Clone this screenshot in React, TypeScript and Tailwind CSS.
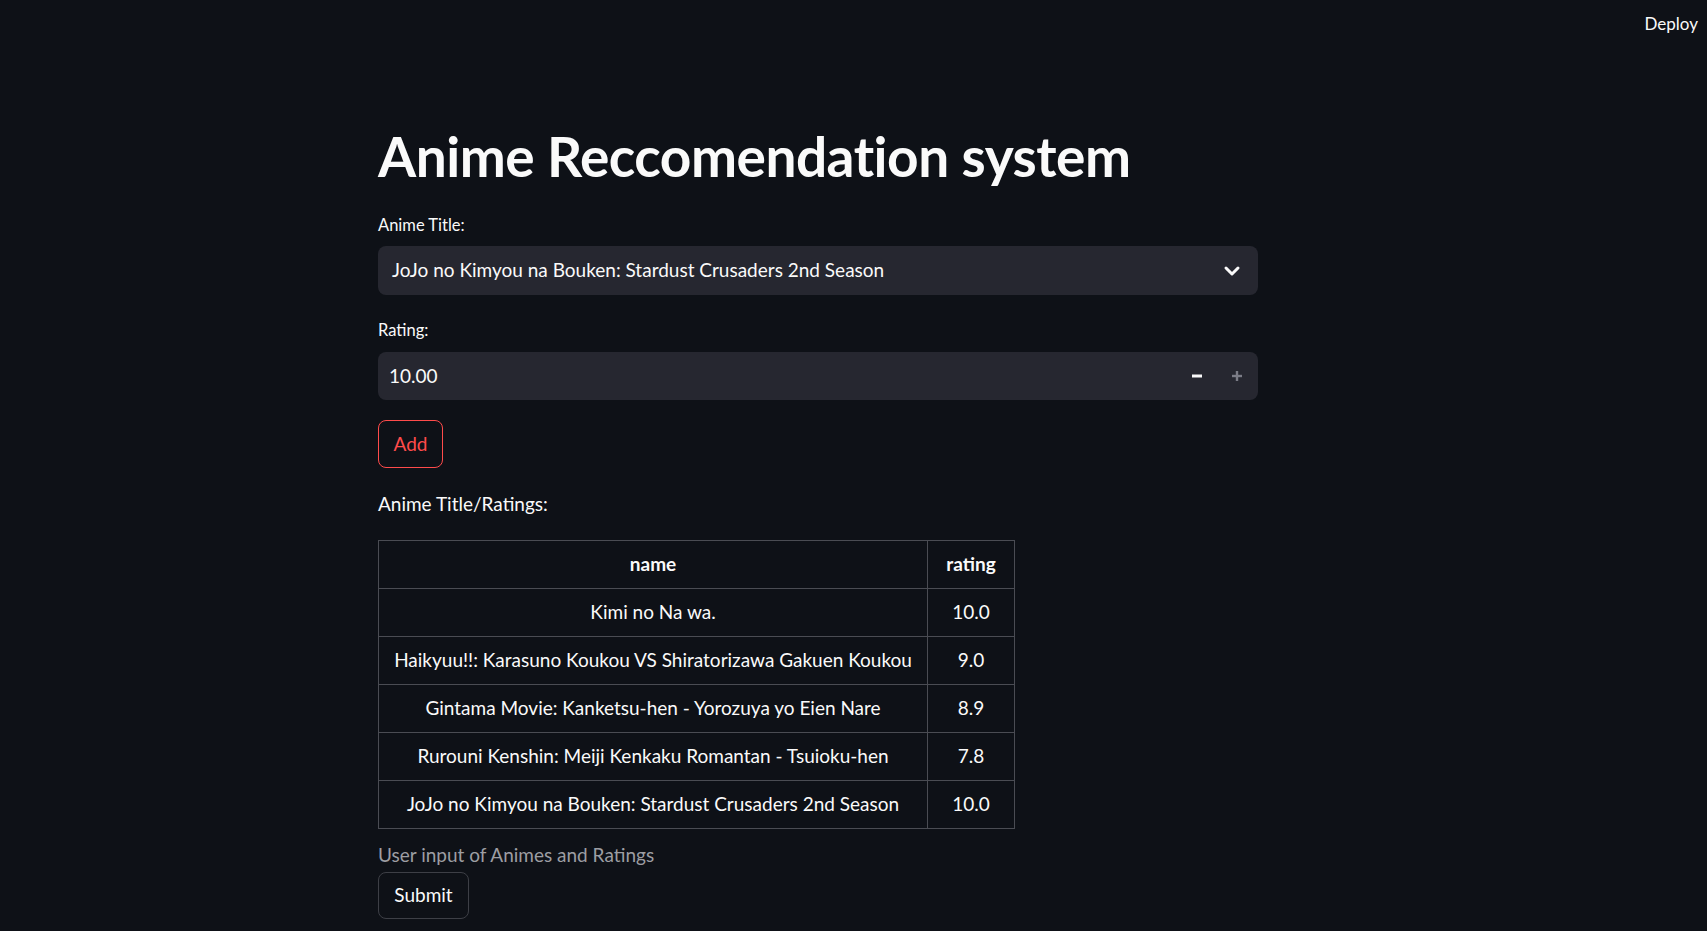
import { ChevronDown } from 'lucide-react'

const rows: [string, string][] = [
  ['Kimi no Na wa.', '10.0'],
  ['Haikyuu!!: Karasuno Koukou VS Shiratorizawa Gakuen Koukou', '9.0'],
  ['Gintama Movie: Kanketsu-hen - Yorozuya yo Eien Nare', '8.9'],
  ['Rurouni Kenshin: Meiji Kenkaku Romantan - Tsuioku-hen', '7.8'],
  ['JoJo no Kimyou na Bouken: Stardust Crusaders 2nd Season', '10.0'],
]

export default function App(): React.ReactElement {
  return (
    <div
      className="min-h-screen bg-[#0e1117] text-[#fafafa]"
      style={{ fontFamily: 'Lato, "Noto Sans", sans-serif' }}
    >
      {/* Top bar */}
      <div className="h-[48px] flex items-center justify-end pr-[9px]">
        <span className="text-[17px]">Deploy</span>
      </div>

      <div className="pl-[378px] pt-[76px] pb-[5px]">
        <div className="w-[880px] flex flex-col">
          <h1 className="h-[64px] leading-[64px] text-[55px] font-bold tracking-[-0.5px]">
            Anime Reccomendation system
          </h1>

          {/* Select */}
          <label className="mt-[27px] h-[20px] leading-[20px] text-[16.5px]">Anime Title:</label>
          <div className="mt-[11px] h-[49px] rounded-[8px] bg-[#262730] flex items-center pl-[14px] pr-[14px]">
            <span className="flex-1 text-[19px]">JoJo no Kimyou na Bouken: Stardust Crusaders 2nd Season</span>
            <ChevronDown size={24} strokeWidth={3} className="text-[#fafafa]" />
          </div>

          {/* Number input */}
          <label className="mt-[25px] h-[20px] leading-[20px] text-[16.5px]">Rating:</label>
          <div className="mt-[12px] h-[48px] rounded-[8px] bg-[#262730] flex items-center pl-[11px]">
            <span className="flex-1 text-[19px]">10.00</span>
            <button className="w-[40px] h-full flex items-center justify-center">
              <svg width="12" height="12" viewBox="0 0 12 12">
                <rect x="1" y="4.5" width="10" height="3" fill="#fafafa" />
              </svg>
            </button>
            <button className="w-[40px] h-full flex items-center justify-center mr-[1px]">
              <svg width="12" height="12" viewBox="0 0 12 12">
                <rect x="1" y="4.8" width="10" height="2.4" fill="#7b7c86" />
                <rect x="4.8" y="1" width="2.4" height="10" fill="#7b7c86" />
              </svg>
            </button>
          </div>

          {/* Add button */}
          <div className="mt-[20px]">
            <button className="h-[48px] w-[65px] rounded-[8px] border border-[#ff4b4b] text-[#ff4b4b] text-[19px] flex items-center justify-center">
              Add
            </button>
          </div>

          <p className="mt-[24px] h-[24px] leading-[24px] text-[19px]">Anime Title/Ratings:</p>

          {/* Table */}
          <table className="mt-[24px] w-[637px] border-collapse text-[19px]">
            <thead>
              <tr className="h-[48px]">
                <th className="w-[550px] border border-[#4a4c53] font-bold text-center">name</th>
                <th className="w-[87px] border border-[#4a4c53] font-bold text-center">rating</th>
              </tr>
            </thead>
            <tbody>
              {rows.map(([name, rating]) => (
                <tr key={name} className="h-[48px]">
                  <td className="border border-[#4a4c53] text-center">{name}</td>
                  <td className="border border-[#4a4c53] text-center">{rating}</td>
                </tr>
              ))}
            </tbody>
          </table>

          <p className="mt-[16px] h-[20px] leading-[20px] text-[19px] text-[#9d9ea3]">User input of Animes and Ratings</p>

          <div className="mt-[7px]">
            <button className="h-[47px] w-[91px] rounded-[8px] border border-[#3d3f46] text-[19px] flex items-center justify-center">
              Submit
            </button>
          </div>
        </div>
      </div>
    </div>
  )
}
